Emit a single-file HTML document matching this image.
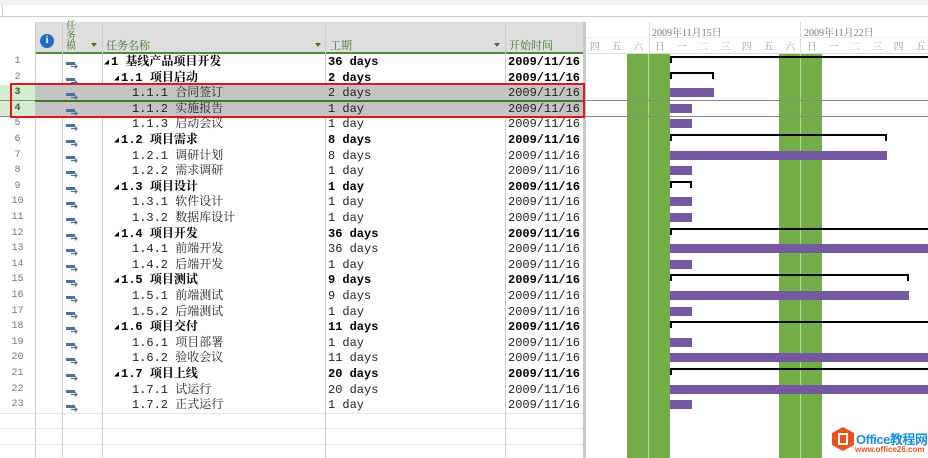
<!DOCTYPE html><html><head><meta charset="utf-8"><style>
*{margin:0;padding:0;box-sizing:border-box}
body{width:928px;height:458px;overflow:hidden;background:#fff;position:relative;font-family:"Liberation Mono","Noto Serif CJK SC",monospace;font-size:12px;color:#222}
.a{position:absolute}
.r{position:absolute;left:0;width:928px;height:15.6px}
.r div{position:absolute;top:0;height:15.6px;line-height:16.6px;white-space:nowrap}
.n{left:0;width:35px;text-align:center;font-size:10px;color:#777}
.ic{left:66px;top:4px!important;width:13px;height:8px!important}
.t{left:102px}
.d{left:328px}
.s{left:508px}
.b{font-weight:bold;color:#000}
.tr{font-size:5px;vertical-align:top;position:relative;top:1px;margin-right:2px}
.bar{background:#7459a0;top:3px!important;height:9px!important}
.sum{top:2px!important;height:7px!important;border:2px solid #000;border-bottom:none}
.sl{top:2px!important;height:7px!important;border-top:2px solid #000;border-left:2px solid #000}
.hd{font-family:"Liberation Serif","Noto Serif CJK SC",serif;font-size:11px;color:#3d7a2a}
.wk{font-family:"Liberation Serif","Noto Serif CJK SC",serif;font-size:10px;color:#999;text-align:center;width:21.7px;top:38px}
</style></head><body>
<div class="a" style="left:0;top:0;width:928px;height:5px;background:#f0f0f0"></div>
<div class="a" style="left:0;top:5px;width:928px;height:12px;border-bottom:1px solid #ccc;background:#fff"></div>
<div class="a" style="left:2px;top:5px;width:1px;height:12px;background:#ccc"></div>
<div class="a" style="left:35px;top:22px;width:548px;height:32px;background:#dedede;border-bottom:2px solid #4a8a3a"></div>
<div class="a" style="left:0;top:22px;width:35px;height:32px;background:#fff"></div>
<div class="a" style="left:62px;top:22px;width:1px;height:436px;background:#ccc"></div>
<div class="a" style="left:102px;top:22px;width:1px;height:436px;background:#ccc"></div>
<div class="a" style="left:325px;top:22px;width:1px;height:436px;background:#ccc"></div>
<div class="a" style="left:505px;top:22px;width:1px;height:436px;background:#ccc"></div>
<div class="a" style="left:35px;top:22px;width:1px;height:436px;background:#ccc"></div>
<div class="a" style="left:583px;top:22px;width:3px;height:436px;background:#c8c8c8"></div>
<div class="a" style="left:40px;top:34px;width:14px;height:14px;border-radius:50%;background:#1f6fc0;color:#fff;font:bold 10px 'Liberation Serif';text-align:center;line-height:14px">i</div>
<div class="a hd" style="left:66px;top:22px;width:12px;line-height:10px;font-size:10px">任务模</div>
<div class="a" style="left:91px;top:43px;border:3px solid transparent;border-top:4px solid #3d7a2a"></div>
<div class="a hd" style="left:106px;top:37px">任务名称</div>
<div class="a" style="left:315px;top:43px;border:3px solid transparent;border-top:4px solid #3d7a2a"></div>
<div class="a hd" style="left:330px;top:37px">工期</div>
<div class="a" style="left:494px;top:43px;border:3px solid transparent;border-top:4px solid #3d7a2a"></div>
<div class="a hd" style="left:509px;top:37px">开始时间</div>
<div class="a" style="left:586px;top:22px;width:342px;height:32px;background:#fff;border-bottom:1px solid #ddd"></div>
<div class="a" style="left:649px;top:22px;width:1px;height:32px;background:#ddd"></div>
<div class="a" style="left:800px;top:22px;width:1px;height:32px;background:#ddd"></div>
<div class="a" style="left:652px;top:24px;font-family:'Liberation Serif','Noto Serif CJK SC',serif;font-size:10px;color:#777">2009年11月15日</div>
<div class="a" style="left:804px;top:24px;font-family:'Liberation Serif','Noto Serif CJK SC',serif;font-size:10px;color:#777">2009年11月22日</div>
<div class="a" style="left:586px;top:37px;width:342px;height:1px;background:#eee"></div>
<div class="a wk" style="left:584px">四</div><div class="a wk" style="left:605.7px">五</div><div class="a wk" style="left:627.4px">六</div><div class="a wk" style="left:649px">日</div><div class="a wk" style="left:670.8px">一</div><div class="a wk" style="left:692.5px">二</div><div class="a wk" style="left:714.2px">三</div><div class="a wk" style="left:735.9px">四</div><div class="a wk" style="left:757.6px">五</div><div class="a wk" style="left:779.3px">六</div><div class="a wk" style="left:801px">日</div><div class="a wk" style="left:822.7px">一</div><div class="a wk" style="left:844.4px">二</div><div class="a wk" style="left:866.1px">三</div><div class="a wk" style="left:887.8px">四</div><div class="a wk" style="left:909.5px">五</div>
<div class="a" style="left:627px;top:54px;width:43px;height:404px;background:#72ad47"></div>
<div class="a" style="left:648px;top:54px;width:1px;height:404px;background:#b4d89a"></div>
<div class="a" style="left:779px;top:54px;width:43px;height:404px;background:#72ad47"></div>
<div class="a" style="left:800px;top:54px;width:1px;height:404px;background:#b4d89a"></div>
<div class="a" style="left:35px;top:85.2px;width:548px;height:31.2px;background:#c4c4c4"></div>
<div class="a" style="left:0;top:85.2px;width:35px;height:31.2px;background:#d4ecd0"></div>
<div class="a" style="left:0;top:100.3px;width:928px;height:1px;background:#8a8a8a"></div>
<div class="a" style="left:0;top:116px;width:928px;height:1px;background:#8a8a8a"></div>
<div class="a" style="left:35px;top:100px;width:548px;height:2px;background:#3d7a2a"></div>
<div class="a" style="left:10px;top:83px;width:575px;height:35px;border:2px solid #e0161b"></div>
<div class="a" style="left:0;top:413px;width:583px;height:1px;background:#e4e4e4"></div>
<div class="a" style="left:0;top:428px;width:583px;height:1px;background:#e4e4e4"></div>
<div class="a" style="left:0;top:444px;width:583px;height:1px;background:#e4e4e4"></div>
<svg width="0" height="0" style="position:absolute"><defs><g id="m"><rect x="0" y="1" width="9" height="3" fill="#4a6fa0"/><path d="M5 5.5h6M9 3.5l2 2-2 2" stroke="#4a6fa0" stroke-width="1.2" fill="none"/></g></defs></svg>

<div class="r" style="top:54px"><div class="n">1</div><div class="ic"><svg width="13" height="8"><use href="#m"/></svg></div><div class="t b" style="left:104px"><span class="tr">◢</span>1 基线产品项目开发</div><div class="d b">36 days</div><div class="s b">2009/11/16</div><div class="sl" style="left:670px;width:258px"></div></div>
<div class="r" style="top:69.6px"><div class="n">2</div><div class="ic"><svg width="13" height="8"><use href="#m"/></svg></div><div class="t b" style="left:114px"><span class="tr">◢</span>1.1 项目启动</div><div class="d b">2 days</div><div class="s b">2009/11/16</div><div class="sum" style="left:670px;width:44px"></div></div>
<div class="r" style="top:85.2px"><div class="n" style="color:#2a6a20;font-weight:bold">3</div><div class="ic"><svg width="13" height="8"><use href="#m"/></svg></div><div class="t" style="left:132px">1.1.1 合同签订</div><div class="d">2 days</div><div class="s">2009/11/16</div><div class="bar" style="left:670px;width:44px"></div></div>
<div class="r" style="top:100.8px"><div class="n" style="color:#2a6a20;font-weight:bold">4</div><div class="ic"><svg width="13" height="8"><use href="#m"/></svg></div><div class="t" style="left:132px">1.1.2 实施报告</div><div class="d">1 day</div><div class="s">2009/11/16</div><div class="bar" style="left:670px;width:22px"></div></div>
<div class="r" style="top:116.4px"><div class="n">5</div><div class="ic"><svg width="13" height="8"><use href="#m"/></svg></div><div class="t" style="left:132px">1.1.3 启动会议</div><div class="d">1 day</div><div class="s">2009/11/16</div><div class="bar" style="left:670px;width:22px"></div></div>
<div class="r" style="top:132px"><div class="n">6</div><div class="ic"><svg width="13" height="8"><use href="#m"/></svg></div><div class="t b" style="left:114px"><span class="tr">◢</span>1.2 项目需求</div><div class="d b">8 days</div><div class="s b">2009/11/16</div><div class="sum" style="left:670px;width:217px"></div></div>
<div class="r" style="top:147.6px"><div class="n">7</div><div class="ic"><svg width="13" height="8"><use href="#m"/></svg></div><div class="t" style="left:132px">1.2.1 调研计划</div><div class="d">8 days</div><div class="s">2009/11/16</div><div class="bar" style="left:670px;width:217px"></div></div>
<div class="r" style="top:163.2px"><div class="n">8</div><div class="ic"><svg width="13" height="8"><use href="#m"/></svg></div><div class="t" style="left:132px">1.2.2 需求调研</div><div class="d">1 day</div><div class="s">2009/11/16</div><div class="bar" style="left:670px;width:22px"></div></div>
<div class="r" style="top:178.8px"><div class="n">9</div><div class="ic"><svg width="13" height="8"><use href="#m"/></svg></div><div class="t b" style="left:114px"><span class="tr">◢</span>1.3 项目设计</div><div class="d b">1 day</div><div class="s b">2009/11/16</div><div class="sum" style="left:670px;width:22px"></div></div>
<div class="r" style="top:194.4px"><div class="n">10</div><div class="ic"><svg width="13" height="8"><use href="#m"/></svg></div><div class="t" style="left:132px">1.3.1 软件设计</div><div class="d">1 day</div><div class="s">2009/11/16</div><div class="bar" style="left:670px;width:22px"></div></div>
<div class="r" style="top:210px"><div class="n">11</div><div class="ic"><svg width="13" height="8"><use href="#m"/></svg></div><div class="t" style="left:132px">1.3.2 数据库设计</div><div class="d">1 day</div><div class="s">2009/11/16</div><div class="bar" style="left:670px;width:22px"></div></div>
<div class="r" style="top:225.6px"><div class="n">12</div><div class="ic"><svg width="13" height="8"><use href="#m"/></svg></div><div class="t b" style="left:114px"><span class="tr">◢</span>1.4 项目开发</div><div class="d b">36 days</div><div class="s b">2009/11/16</div><div class="sl" style="left:670px;width:258px"></div></div>
<div class="r" style="top:241.2px"><div class="n">13</div><div class="ic"><svg width="13" height="8"><use href="#m"/></svg></div><div class="t" style="left:132px">1.4.1 前端开发</div><div class="d">36 days</div><div class="s">2009/11/16</div><div class="bar" style="left:670px;width:258px"></div></div>
<div class="r" style="top:256.8px"><div class="n">14</div><div class="ic"><svg width="13" height="8"><use href="#m"/></svg></div><div class="t" style="left:132px">1.4.2 后端开发</div><div class="d">1 day</div><div class="s">2009/11/16</div><div class="bar" style="left:670px;width:22px"></div></div>
<div class="r" style="top:272.4px"><div class="n">15</div><div class="ic"><svg width="13" height="8"><use href="#m"/></svg></div><div class="t b" style="left:114px"><span class="tr">◢</span>1.5 项目测试</div><div class="d b">9 days</div><div class="s b">2009/11/16</div><div class="sum" style="left:670px;width:239px"></div></div>
<div class="r" style="top:288px"><div class="n">16</div><div class="ic"><svg width="13" height="8"><use href="#m"/></svg></div><div class="t" style="left:132px">1.5.1 前端测试</div><div class="d">9 days</div><div class="s">2009/11/16</div><div class="bar" style="left:670px;width:239px"></div></div>
<div class="r" style="top:303.6px"><div class="n">17</div><div class="ic"><svg width="13" height="8"><use href="#m"/></svg></div><div class="t" style="left:132px">1.5.2 后端测试</div><div class="d">1 day</div><div class="s">2009/11/16</div><div class="bar" style="left:670px;width:22px"></div></div>
<div class="r" style="top:319.2px"><div class="n">18</div><div class="ic"><svg width="13" height="8"><use href="#m"/></svg></div><div class="t b" style="left:114px"><span class="tr">◢</span>1.6 项目交付</div><div class="d b">11 days</div><div class="s b">2009/11/16</div><div class="sl" style="left:670px;width:258px"></div></div>
<div class="r" style="top:334.8px"><div class="n">19</div><div class="ic"><svg width="13" height="8"><use href="#m"/></svg></div><div class="t" style="left:132px">1.6.1 项目部署</div><div class="d">1 day</div><div class="s">2009/11/16</div><div class="bar" style="left:670px;width:22px"></div></div>
<div class="r" style="top:350.4px"><div class="n">20</div><div class="ic"><svg width="13" height="8"><use href="#m"/></svg></div><div class="t" style="left:132px">1.6.2 验收会议</div><div class="d">11 days</div><div class="s">2009/11/16</div><div class="bar" style="left:670px;width:258px"></div></div>
<div class="r" style="top:366px"><div class="n">21</div><div class="ic"><svg width="13" height="8"><use href="#m"/></svg></div><div class="t b" style="left:114px"><span class="tr">◢</span>1.7 项目上线</div><div class="d b">20 days</div><div class="s b">2009/11/16</div><div class="sl" style="left:670px;width:258px"></div></div>
<div class="r" style="top:381.6px"><div class="n">22</div><div class="ic"><svg width="13" height="8"><use href="#m"/></svg></div><div class="t" style="left:132px">1.7.1 试运行</div><div class="d">20 days</div><div class="s">2009/11/16</div><div class="bar" style="left:670px;width:258px"></div></div>
<div class="r" style="top:397.2px"><div class="n">23</div><div class="ic"><svg width="13" height="8"><use href="#m"/></svg></div><div class="t" style="left:132px">1.7.2 正式运行</div><div class="d">1 day</div><div class="s">2009/11/16</div><div class="bar" style="left:670px;width:22px"></div></div>
<div class="a" style="left:832px;top:427px;width:22px;height:24px;background:#e8541c;clip-path:polygon(50% 0,100% 25%,100% 75%,50% 100%,0 75%,0 25%)"></div>
<div class="a" style="left:838px;top:433px;width:10px;height:12px;border:2px solid #fff"></div>
<div class="a" style="left:856px;top:429px;font:bold 13px 'Liberation Sans','Noto Sans CJK SC',sans-serif;color:#1a8fe0;white-space:nowrap;letter-spacing:-0.5px">Office教程网</div>
<div class="a" style="left:855px;top:445px;font:bold 8px 'Liberation Sans',sans-serif;color:#e8541c;white-space:nowrap">www.office26.com</div>
</body></html>
